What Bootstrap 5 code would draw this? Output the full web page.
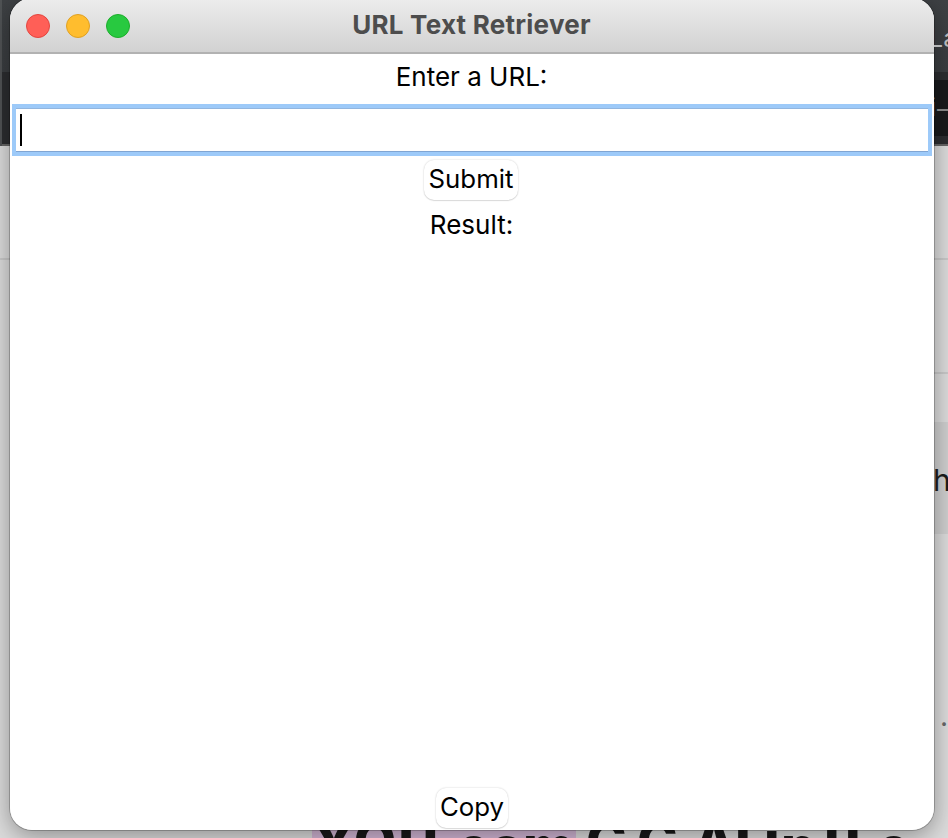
<!DOCTYPE html>
<html lang="en">
<head>
<meta charset="utf-8">
<title>URL Text Retriever</title>
<link href="https://cdn.jsdelivr.net/npm/bootstrap@5.3.0/dist/css/bootstrap.min.css" rel="stylesheet">
<style>
body{width:948px;height:838px;font-family:Inter,"Liberation Sans",sans-serif;color:#000;background:#dcdcdc}
.desktop{width:948px;height:838px;background:#dcdcdc}
.dark-head{height:146px;background:linear-gradient(#3e4144 0,#3a3d40 72px,#2c2d30 72px,#2c2d30 144px,#656565 144px);border-left:2px solid #505355}
.dark-strip{left:934px;top:80px;width:14px;height:56px;background:#191a1c}
.rule{width:948px;height:2px;background:#c9c9c9}
.band{left:934px;top:422px;width:14px;height:112px;background:#cfcfcf}
.highlight{left:312px;top:825px;width:264px;height:13px;background:#d2b6d5}
.behind{white-space:nowrap;line-height:1;color:#191919}
.heading-piece{font-size:55px;font-weight:800;top:814px}
.low{top:819px}
.wide{letter-spacing:2px}
.app-window{left:10px;top:-2px;width:924px;height:832px;border-radius:22px;background:#fff;overflow:hidden}
.window-shade{left:10px;top:-2px;width:924px;height:832px;border-radius:22px;box-shadow:0 0 0 1px rgba(0,0,0,.22),0 6px 24px rgba(0,0,0,.36)}
.titlebar{height:56px;flex:none;background:linear-gradient(#ededed,#d2d2d2);border-bottom:2px solid #b2b2b2;padding:0 16px}
.light{width:24px;height:24px;border-radius:50%;border:1px solid;margin-top:2px}
.red{background:#ff5f57;border-color:#e2463f}.yellow{background:#ffbd2e;border-color:#dfa023}.green{background:#28c940;border-color:#1dad2b}
.caption-text{left:0;right:1px;top:12px;font-size:26px;line-height:30px;letter-spacing:.25px;font-weight:700;color:#4d4d4d}
.label-text{font-size:26px;line-height:30px;padding-right:1px}
.url-box{height:52px;margin:12px 2px 0;border:4px solid #9dcaf9;flex:none;box-shadow:inset 0 1px #92b6df,inset 0 -1px #80a5d3;padding:6px 4px}
.caret{width:2px;height:32px;background:#000}
.push{border:0;background:#fff;border-radius:10px;box-shadow:0 0 2px rgba(0,0,0,.2),0 1px 1px rgba(0,0,0,.1);height:40px;padding:0 0 2px;font-size:25.8px;line-height:36px;color:#000}
.submit{width:94px;margin-top:4px;margin-right:2px}.copy{width:72px;margin-bottom:2px}
.result{margin-top:10px}
</style>
<script src="https://cdn.jsdelivr.net/npm/bootstrap@5.3.0/dist/js/bootstrap.bundle.min.js"></script>
</head>
<body class="overflow-hidden">
<div class="desktop position-relative overflow-hidden">
 <div class="dark-head"></div>
 <div class="dark-strip position-absolute"></div>
 <div class="rule position-absolute start-0" style="top:258px"></div>
 <div class="rule position-absolute start-50" style="top:372px"></div>
 <div class="band position-absolute"></div>
 <div class="highlight position-absolute"></div>
 <span class="behind heading-piece wide position-absolute" style="left:313px">YOU</span>
 <span class="behind heading-piece low position-absolute" style="left:457px">eam</span>
 <span class="behind heading-piece position-absolute" style="left:586px">G</span>
 <span class="behind heading-piece position-absolute" style="left:637px">G</span>
 <span class="behind heading-piece position-absolute" style="left:693px">A</span>
 <span class="behind heading-piece position-absolute" style="left:735px">I</span>
 <span class="behind heading-piece position-absolute" style="left:764px">i</span>
 <span class="behind heading-piece low position-absolute" style="left:781px">n</span>
 <span class="behind heading-piece position-absolute" style="left:824px">l</span>
 <span class="behind heading-piece position-absolute" style="left:845px">l</span>
 <span class="behind heading-piece low position-absolute" style="left:877px">e</span>
 <div class="window-shade position-absolute"></div>
 <span class="behind position-absolute" style="left:929px;top:26px;font-size:25px;color:#b6b7b8">La</span>
 <span class="behind position-absolute" style="left:930px;top:95px;font-size:25px;color:#707070">i</span>
 <span class="behind position-absolute" style="left:937px;top:97px;font-size:25px;color:#808080">–</span>
 <span class="behind position-absolute" style="left:933px;top:465px;font-size:30px">h</span>
 <span class="behind position-absolute" style="left:940px;top:702px;font-size:28px;color:#606060">.</span>
 <main class="app-window position-absolute d-flex flex-column">
  <header class="titlebar position-relative d-flex align-items-center gap-3">
   <span class="light red"></span><span class="light yellow"></span><span class="light green"></span>
   <div class="caption-text position-absolute text-center">URL Text Retriever</div>
  </header>
  <div class="label-text text-center mt-2">Enter a URL:</div>
  <div class="url-box"><div class="caret"></div></div>
  <button type="button" class="push submit align-self-center">Submit</button>
  <div class="label-text text-center result">Result:</div>
  <button type="button" class="push copy align-self-center mt-auto">Copy</button>
 </main>
</div>
</body>
</html>
